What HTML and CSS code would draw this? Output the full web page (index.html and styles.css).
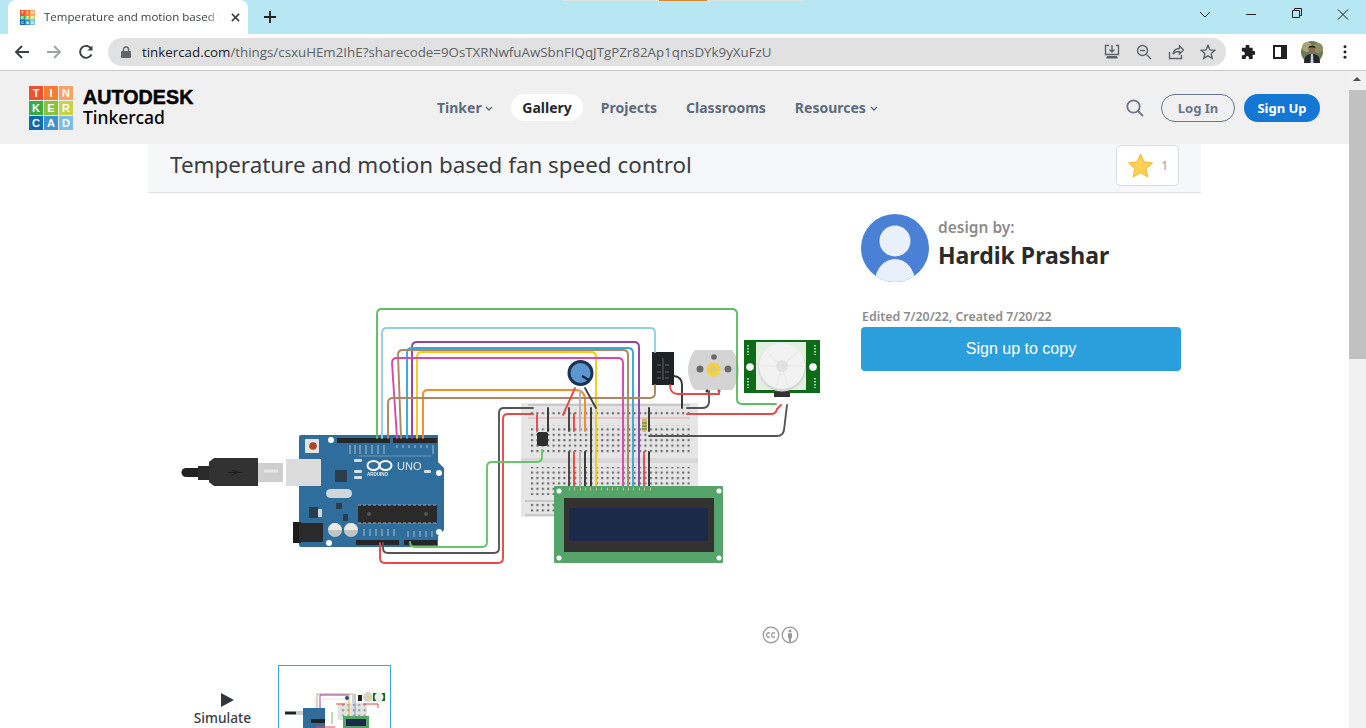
FILE: index.html
```html
<!DOCTYPE html>
<html lang="en">
<head>
<meta charset="utf-8">
<title>Temperature and motion based fan speed control</title>
<link rel="stylesheet" href="styles.css">
</head>
<body>
<header class="chrome">
  <div class="tabstrip">
    <div class="tab">
      <div class="tiles tiles-small" aria-hidden="true">
        <i class="t1">T</i><i class="t2">I</i><i class="t3">N</i><i class="t4">K</i><i class="t5">E</i><i class="t6">R</i><i class="t7">C</i><i class="t8">A</i><i class="t9">D</i>
      </div>
      <span class="tab-title">Temperature and motion based f</span>
      <svg class="tab-close" viewBox="0 0 10 10"><path d="M1 1l8 8M9 1l-8 8"/></svg>
    </div>
    <svg class="new-tab" viewBox="0 0 12 12"><path d="M6 0v12M0 6h12"/></svg>
    <div class="strip-spacer"><div class="strip-mark"><span></span></div></div>
    <div class="window-controls">
      <svg class="win-ico" viewBox="0 0 46 34"><path d="M18 12l5 5 5-5" /></svg>
      <svg class="win-ico" viewBox="0 0 46 34"><path d="M18 14.500h10"/></svg>
      <svg class="win-ico" viewBox="0 0 46 34"><path d="M18.500 10.500h7v7h-7zM20.500 10.500v-2h7v7h-2"/></svg>
      <svg class="win-ico" viewBox="0 0 46 34"><path d="M18 9.500l10 10M28 9.500l-10 10"/></svg>
    </div>
  </div>
  <div class="toolbar">
    <svg class="tb-ico" viewBox="0 0 16 16"><path class="st-dark" d="M15 8H2M8 2L2 8l6 6"/></svg>
    <svg class="tb-ico" viewBox="0 0 16 16"><path class="st-grey" d="M1 8h13M8 2l6 6-6 6"/></svg>
    <svg class="tb-ico" viewBox="0 0 16 16"><path class="st-dark" d="M13.500 10.500A6 6 0 1 1 13.400 5"/><path class="fill-dark" d="M14.500 1.500v5h-5z"/></svg>
    <div class="omnibox">
      <svg class="lock" viewBox="0 0 10 12"><path d="M1 5h8a1 1 0 0 1 1 1v5a1 1 0 0 1-1 1H1a1 1 0 0 1-1-1V6a1 1 0 0 1 1-1z"/><path class="lock-loop" d="M2.500 5V3.500a2.500 2.500 0 0 1 5 0V5"/></svg>
      <span class="url"><b>tinkercad.com</b>/things/csxuHEm2IhE?sharecode=9OsTXRNwfuAwSbnFIQqJTgPZr82Ap1qnsDYk9yXuFzU</span>
      <div class="omni-icons">
        <svg class="omni-ico" viewBox="0 0 16 16"><path d="M5 1.500H1.500v9h13v-9H12M8 1v6.500M5.500 5.500L8 8l2.500-2.500"/><path class="omni-fill" d="M3 12h10l1 2.500H2z"/></svg>
        <svg class="omni-ico" viewBox="0 0 16 16"><circle cx="6.500" cy="6.500" r="5"/><path d="M4 6.500h5M10.500 10.500L15 15"/></svg>
        <svg class="omni-ico" viewBox="0 0 16 16"><path d="M1.500 8v6.500h12V11M5 10c.5-3.500 3-5.500 6.500-5.500V2l4 4-4 4V7.500C9 7.500 6.500 8 5 10z"/></svg>
        <svg class="omni-ico" viewBox="0 0 16 16"><path d="M8 1.500l2 4.400 4.700.5-3.500 3.200 1 4.700L8 11.900l-4.200 2.400 1-4.700L1.300 6.400 6 5.900z"/></svg>
      </div>
    </div>
    <div class="tb-right">
      <svg class="ext-ico" viewBox="0 0 16 16"><path d="M6 1.500a2 2 0 0 1 4 0V3h3.500v3.500H15a2 2 0 0 1 0 4h-1.500V15H9.500v-1.500a1.700 1.700 0 0 0-3.400 0V15H2v-4h1.200a2 2 0 0 0 0-4H2V3h4z"/></svg>
      <svg class="side-ico" viewBox="0 0 14 14"><path d="M0 0h14v14H0z"/><path class="side-hole" d="M2 2h6v10H2z"/></svg>
      <svg class="profile" viewBox="0 0 22 22">
        <circle cx="11" cy="11" r="11" fill="#6f7a57"/>
        <circle cx="6" cy="6" r="5" fill="#a9a37c"/>
        <circle cx="17" cy="7" r="5" fill="#8b8f60"/>
        <path d="M3 22c0-7 3-9 8-9s8 2 8 9z" fill="#23262d"/>
        <path d="M10 13h2l.5 9h-3z" fill="#c6d0db"/>
        <circle cx="11" cy="8" r="3.500" fill="#8d6a50"/>
        <path d="M7.500 7c0-3 7-3 7 0-2-1-5-1-7 0z" fill="#1d1815"/>
      </svg>
      <svg class="menu-ico" viewBox="0 0 4 16"><circle cx="2" cy="2" r="1.700"/><circle cx="2" cy="8" r="1.700"/><circle cx="2" cy="14" r="1.700"/></svg>
    </div>
  </div>
</header>

<div class="viewport">
  <div class="page">
    <nav class="nav">
      <div class="brand">
        <div class="tiles" aria-hidden="true">
          <i class="t1">T</i><i class="t2">I</i><i class="t3">N</i><i class="t4">K</i><i class="t5">E</i><i class="t6">R</i><i class="t7">C</i><i class="t8">A</i><i class="t9">D</i>
        </div>
        <div class="brand-text">
          <span class="brand-top">AUTODESK</span>
          <span class="brand-bottom">Tinkercad</span>
        </div>
      </div>
      <ul class="menu">
        <li class="menu-item">Tinker <svg class="chev" viewBox="0 0 8 5"><path d="M1 1l3 3 3-3"/></svg></li>
        <li class="menu-item menu-active">Gallery</li>
        <li class="menu-item">Projects</li>
        <li class="menu-item">Classrooms</li>
        <li class="menu-item">Resources <svg class="chev" viewBox="0 0 8 5"><path d="M1 1l3 3 3-3"/></svg></li>
      </ul>
      <div class="nav-actions">
        <svg class="search" viewBox="0 0 18 18"><circle cx="7.500" cy="7.500" r="6.200"/><path d="M12 12l5 5"/></svg>
        <a class="btn-login">Log In</a>
        <a class="btn-signup">Sign Up</a>
      </div>
    </nav>

    <main class="content">
      <div class="title-bar">
        <h1 class="title">Temperature and motion based fan speed control</h1>
        <div class="like">
          <svg class="like-star" viewBox="0 0 26 26"><path d="M13 1l3.500 8 8.500.9-6.400 5.700 1.800 8.400L13 19.700 5.600 24l1.800-8.400L1 9.900 9.500 9z"/></svg>
          <span class="like-count">1</span>
        </div>
      </div>

      <div class="columns">
        <section class="left">
          <svg class="diagram" viewBox="160 300 670 275" role="img" aria-label="Circuit diagram">
            <defs>
              <pattern id="holes" x="0" y="0" width="5.400" height="5.400" patternUnits="userSpaceOnUse">
                <rect x="1.700" y="1.700" width="2.200" height="2.200" fill="#6e6e6e"/>
              </pattern>
              <filter id="soft" x="-2%" y="-2%" width="104%" height="104%"><feGaussianBlur stdDeviation="0.450"/></filter>
            </defs>
            <g filter="url(#soft)">
              <!-- breadboard -->
              <rect x="521" y="403" width="177" height="114" fill="#e6e6e6"/>
              <rect x="521" y="458" width="177" height="5" fill="#d8d8d8"/>
              <path d="M528 418h162" stroke="#e0a8a8"/>
              <path d="M528 405h162" stroke="#aaa"/>
              <rect x="530" y="409" width="160" height="8" fill="url(#holes)"/>
              <rect x="530" y="425" width="160" height="28" fill="url(#holes)"/>
              <rect x="530" y="467" width="160" height="28" fill="url(#holes)"/>
              <rect x="530" y="503" width="26" height="10" fill="url(#holes)"/>
              <path d="M525 501h29M525 515h29" stroke="#aaa"/>

              <!-- arduino -->
              <path d="M301 435H438V462L444 468V530L438 536V547H301Q299 547 299 545V437Q299 435 301 435Z" fill="#2f6d9c"/>
              <rect x="305" y="439" width="14" height="14" rx="1" fill="#e3e3e3"/>
              <circle cx="313" cy="446" r="3.800" fill="#a8492c"/>
              <circle cx="331" cy="440" r="3" fill="#fff"/>
              <circle cx="439" cy="473" r="3" fill="#fff"/>
              <circle cx="439" cy="532" r="3" fill="#fff"/>
              <circle cx="329" cy="543" r="3" fill="#fff"/>
              <rect x="337" y="438" width="53" height="5" fill="#26282a"/>
              <rect x="393" y="438" width="44" height="5" fill="#26282a"/>
              <rect x="356" y="540" width="43" height="5" fill="#26282a"/>
              <rect x="404" y="540" width="33" height="5" fill="#26282a"/>
              <rect x="335" y="470" width="12" height="12" rx="1" fill="#2a3d4f"/>
              <rect x="326" y="489" width="26" height="9" rx="4.500" fill="#cfd6dc"/>
              <rect x="358" y="505" width="79" height="18" fill="#2a2a2c"/>
              <path d="M358 505h79M358 523h79" stroke="#9aa5ad" stroke-width="1" stroke-dasharray="3 2"/>
              <circle cx="369" cy="514" r="2" fill="#555"/>
              <circle cx="426" cy="514" r="2" fill="#555"/>
              <rect x="336" y="503" width="6" height="6" fill="#2a3d4f"/>
              <rect x="309" y="507" width="9" height="11" fill="#2a3d4f"/>
              <rect x="318" y="509" width="4" height="8" fill="#cfd6dc"/>
              <rect x="343" y="514" width="5" height="7" fill="#2a3d4f"/>
              <rect x="293" y="522" width="8" height="21" fill="#1c1c1c"/>
              <rect x="299" y="523" width="24" height="19" rx="1" fill="#2a2a2a"/>
              <circle cx="335" cy="530" r="7" fill="#c2c5c3"/>
              <circle cx="351" cy="530" r="7" fill="#c2c5c3"/>
              <path d="M328 530a7 7 0 0 1 14 0zM344 530a7 7 0 0 1 14 0z" fill="#e9e9e6"/>
              <path d="M359 456h72" stroke="#9fb9cf" stroke-width=".6"/>
              <g fill="none" stroke="#fff" stroke-width="2">
                <ellipse cx="373.500" cy="465.500" rx="6" ry="4.500"/>
                <ellipse cx="385.500" cy="465.500" rx="6" ry="4.500"/>
              </g>
              <text class="uno" x="397" y="470">UNO</text>
              <text class="ard" x="367" y="476">ARDUINO</text>
              <rect x="354" y="459" width="8" height="3" rx="1" fill="#d6dde2"/>
              <rect x="354" y="470" width="8" height="3" rx="1" fill="#d6dde2"/>
              <rect x="354" y="476" width="8" height="3" rx="1" fill="#d6dde2"/>
              <rect x="424" y="470" width="7" height="3" rx="1" fill="#d6dde2"/>
              <path d="M350 445v9M355 445v9M360 445v9M366 445v9M372 445v9M378 445v9M384 445v9M397 445v3M403 445v3M409 445v3M415 445v3M421 445v3M427 445v3M433 445v9M364 529v7M370 529v7M376 529v7M382 529v7M388 529v7M394 529v7M408 531v6M414 531v6M420 531v6M426 531v6M432 531v6" stroke="#a9c0d2" stroke-width="1"/>

              <!-- USB cable -->
              <path d="M186 472.500h16" stroke="#222" stroke-width="9" stroke-linecap="round"/>
              <path d="M198 466h11v14h-11z" fill="#2a2a2a"/>
              <path d="M209 462l5-4h44v28h-44l-5-4z" fill="#333"/>
              <path d="M228 472.500h14M232 470l6 2-6 3" stroke="#1d1d1d" stroke-width="1" fill="none"/>
              <path d="M258 463h25v19h-25z" fill="#cfcfcf"/>
              <path d="M264 471h14" stroke="#e6e6e6" stroke-width="3"/>
              <path d="M286 459h35v27h-35z" fill="#dcdcdc"/>

              <!-- relay, motor, PIR -->
              <rect x="652" y="352" width="22" height="33" fill="#1f2226"/>
              <path d="M663 358v22M657 365h4M665 365h4M657 372h4M665 372h4M657 378h4M665 378h4" stroke="#777" stroke-width=".8"/>
              <path d="M695 350h37c4 4 7 13 7 20s-3 16-7 20h-37c-4-4-7-13-7-20s3-16 7-20z" fill="#d4d4d4"/>
              <circle cx="714" cy="357" r="2.800" fill="#6a6a6a"/>
              <circle cx="700" cy="369" r="3.500" fill="#6a6a6a"/>
              <circle cx="728" cy="369" r="3.500" fill="#6a6a6a"/>
              <circle cx="713.500" cy="369.500" r="6.500" fill="#f4d046" stroke="#f4d046" stroke-width="2" stroke-dasharray="1.800 1.500"/>
              <circle cx="713.500" cy="369.500" r="3.300" fill="#dcc878"/>
              <circle cx="707" cy="391" r="1.500" fill="#333"/>
              <circle cx="719" cy="391" r="1.500" fill="#b22"/>

              <rect x="744" y="340" width="76" height="53" fill="#0d6a12"/>
              <rect x="756" y="342" width="50" height="48" fill="#e3f0df"/>
              <circle cx="782" cy="367.500" r="24" fill="#d6d6d6"/>
              <circle cx="782" cy="366" r="23" fill="#f2f2f2"/>
              <path d="M782 366l-16-15M782 366l16-15M782 366l-6 21M782 366l6 21M782 366h-22M782 366h22" stroke="#ebebeb" stroke-width="1.300"/>
              <circle cx="782" cy="366" r="6" fill="#e2e2e2"/>
              <circle cx="750" cy="367" r="3.800" fill="#fff"/>
              <circle cx="813" cy="367" r="3.800" fill="#fff"/>
              <path d="M748 345v10M815 345v10M748 378v10M815 378v10" stroke="#a9cfa9" stroke-width="2" stroke-dasharray="1.500 1.500"/>
              <rect x="774" y="392" width="16" height="5" fill="#333"/>

              <!-- wires -->
              <g class="wires">
                <path stroke="#5cc05f" d="M377 438V314q0-5 5-5H732q5 0 5 5V399q0 5 5 5H776"/>
                <path stroke="#8ed1e2" d="M382 438V333q0-5 5-5H650q5 0 5 5V352"/>
                <path stroke="#8b44a8" d="M412 438V347q0-5 5-5H634q5 0 5 5V488"/>
                <path stroke="#35a9dc" d="M407 438V353q0-5 5-5H628q5 0 5 5V488"/>
                <path stroke="#b0855f" d="M401 438L398 355q0-5 5-5H623q5 0 5 5V488"/>
                <path stroke="#f3cb19" d="M417 438V357q0-5 5-5H591q5 0 5 5V488"/>
                <path stroke="#d64aa8" d="M397 438L392 363q0-5 5-5H618q5 0 5 5V488"/>
                <path stroke="#f28c28" d="M423 438V395q0-5 5-5H575q10 0 10 10V431"/>
                <path stroke="#b0855f" d="M388 438V403q0-5 5-5H650q5 0 5-5V385"/>
                <path stroke="#555" d="M533 408H504q-5 0-5 5V548q0 5-5 5H388q-5 0-5-5V543"/>
                <path stroke="#e64a4a" d="M533 414H508q-5 0-5 5V558q0 5-5 5H385q-5 0-5-5V543"/>
                <path stroke="#69c56c" d="M410 542q0 5 5 5H482q5 0 5-5V467q0-5 5-5H537q5 0 5-5V450"/>
                <path stroke="#e64a4a" d="M537 415V431"/>
                <path stroke="#333" d="M548 408V431"/>
                <path stroke="#444" d="M569 408V431M569 452V488"/>
                <path stroke="#e64a4a" d="M574 414V431M574 452V488"/>
                <path stroke="#b5b5b5" d="M580 390V431M580 452V488"/>
                <path stroke="#333" d="M585 452V488"/>
                <path stroke="#333" d="M591 408V488"/>
                <path stroke="#e64a4a" d="M563 415L575 388"/>
                <path stroke="#444" d="M596 408L585 388"/>
                <path stroke="#333" d="M649 408V431M649 452V488"/>
                <path stroke="#e64a4a" d="M644 452V488"/>
                <path stroke="#555" d="M649 436H777q6 0 7-6L787 405"/>
                <path stroke="#e64a4a" d="M687 414H771q5 0 6-5L781 405"/>
                <path stroke="#555" d="M687 408H702q6 0 7-5V391"/>
                <path stroke="#333" d="M682 408V385q0-8-8-9"/>
                <path stroke="#e64a4a" d="M670 385q0 9 8 9H719V391"/>
              </g>
              <rect x="642" y="418" width="5" height="14" rx="2" fill="#d8b56a"/>
              <path d="M642 423h5M642 426h5M642 429h5" stroke="#3b8f3f" stroke-width="1.200"/>
              <rect x="537" y="432" width="11" height="14" rx="2" fill="#2e2e2e"/>

              <circle cx="580.500" cy="373" r="13" fill="#1e3550"/>
              <circle cx="580.500" cy="373" r="10" fill="#5a97d1"/>
              <path d="M582 376l7 4" stroke="#15273c" stroke-width="2.200"/>

              <!-- LCD -->
              <rect x="554" y="486" width="169" height="77" rx="1" fill="#55a46b"/>
              <rect x="564" y="498" width="150" height="54" fill="#333"/>
              <rect x="569" y="508" width="139" height="33" fill="#1d2b4a"/>
              <circle cx="559" cy="491" r="2.500" fill="#fff"/>
              <circle cx="719" cy="491" r="2.500" fill="#fff"/>
              <circle cx="559" cy="558" r="2.500" fill="#fff"/>
              <circle cx="719" cy="558" r="2.500" fill="#fff"/>
              <path d="M569 489h1M574 489h1M580 489h1M585 489h1M590 489h1M596 489h1M601 489h1M607 489h1M612 489h1M617 489h1M623 489h1M628 489h1M633 489h1M639 489h1M644 489h1M650 489h1" stroke="#cdb98e" stroke-width="3"/>
            </g>
          </svg>
          <div class="license">
            <svg class="cc" viewBox="0 0 37 18"><circle cx="9" cy="9" r="7.800"/><path d="M8 7.200a2.200 2.200 0 1 0 0 3.600M13 7.200a2.200 2.200 0 1 0 0 3.600"/><circle cx="28" cy="9" r="7.800"/><circle class="cc-fill" cx="28" cy="5" r="1.500"/><path class="cc-fill" d="M26 7.200h4v5h-1V16h-2v-3.800h-1z"/></svg>
          </div>
          <div class="thumbs">
            <div class="simulate">
              <svg class="sim-play" viewBox="0 0 13 14"><path d="M0 0l13 7-13 7z"/></svg>
              <span class="sim-label">Simulate</span>
            </div>
            <div class="thumb">
              <svg class="thumb-art" viewBox="279 666 111 62">
                <path d="M317 710V694H353V716" fill="none" stroke="#c4a283"/>
                <path d="M320 708V695H349" fill="none" stroke="#8b44a8"/>
                <path d="M315 708V697" fill="none" stroke="#e6e6e6"/>
                <path d="M320 699H345" fill="none" stroke="#f7dede"/>
                <rect x="338" y="703" width="29" height="17" fill="#e2e2e2"/>
                <rect x="339" y="704" width="27" height="12" fill="url(#holes)" opacity=".6"/>
                <path d="M349 694V716" fill="none" stroke="#e4ba27"/>
                <path d="M355 694V716" fill="none" stroke="#6a9fc9"/>
                <path d="M285 713H297" stroke="#222" stroke-width="3"/>
                <rect x="296" y="711" width="7" height="4" fill="#ccc"/>
                <rect x="303" y="708" width="22" height="20" fill="#2f6d9c"/>
                <rect x="311" y="719" width="14" height="4" fill="#222"/>
                <rect x="343" y="716" width="26" height="12" fill="#55a46b"/>
                <rect x="346" y="719" width="20" height="7" fill="#1d2b4a"/>
                <circle cx="347" cy="698" r="2" fill="#1e4f80"/>
                <rect x="358" y="695" width="4" height="6" fill="#222"/>
                <circle cx="368" cy="697" r="5" fill="#d4d4d4"/>
                <circle cx="368" cy="697" r="1.500" fill="#f4d046"/>
                <rect x="373" y="693" width="12" height="8" fill="#0d6a12"/>
                <circle cx="379" cy="697" r="4.500" fill="#ededee"/>
                <path d="M332 712V724" stroke="#69c56c" fill="none"/>
                <path d="M316 727H335" stroke="#e64a4a" fill="none"/>
                <path d="M363 704H378M378 704v4" stroke="#e64a4a" fill="none"/>
                <path d="M336 704H345" stroke="#e64a4a" fill="none"/>
              </svg>
            </div>
          </div>
        </section>

        <aside class="right">
          <div class="author">
            <svg class="avatar" viewBox="0 0 68 68">
              <defs><clipPath id="avatar-clip"><circle cx="34" cy="34" r="34"/></clipPath></defs>
              <circle cx="34" cy="34" r="34" fill="#4a80d6"/>
              <g clip-path="url(#avatar-clip)" fill="#e9f0fb">
                <circle cx="34" cy="27" r="15.500"/>
                <ellipse cx="34" cy="68" rx="20" ry="23"/>
              </g>
            </svg>
            <div class="author-text">
              <span class="design-by">design by:</span>
              <span class="author-name">Hardik Prashar</span>
            </div>
          </div>
          <p class="dates">Edited 7/20/22, Created 7/20/22</p>
          <a class="copy-btn">Sign up to copy</a>
        </aside>
      </div>
    </main>
  </div>
  <div class="scrollbar">
    <div class="sb-up"></div>
    <div class="sb-thumb"></div>
  </div>
</div>
</body>
</html>
```
FILE: styles.css
```css
* { box-sizing: border-box; }
html, body { margin: 0; height: 100%; overflow: hidden; }
body { width: 1366px; height: 728px; display: flex; flex-direction: column; background: #fff; font-family: "Noto Sans", sans-serif; color: #2b2b2b; }

/* browser chrome */
.chrome { flex: none; }
.tabstrip { height: 34px; background: #b6e7f3; display: flex; align-items: flex-end; }
.tab { width: 240px; height: 34px; margin-left: 8px; padding: 0 9px 0 12px; background: #fff; border-radius: 8px 8px 0 0; display: flex; align-items: center; gap: 9px; position: relative; }
.tab-title { font: 11.500px/16px "Open Sans", sans-serif; color: #3c4043; white-space: nowrap; width: 176px; padding-bottom: 1px; -webkit-mask-image: linear-gradient(90deg, #000 93%, transparent 100%); mask-image: linear-gradient(90deg, #000 93%, transparent 100%); }
.tab-close { width: 9px; height: 9px; flex: none; fill: none; stroke: #3c4043; stroke-width: 1.700; margin-left: 2px; }
.new-tab { width: 12px; height: 12px; margin: 0 0 11px 16px; fill: none; stroke: #202124; stroke-width: 1.800; flex: none; }
.strip-spacer { flex: 1; height: 34px; position: relative; }
.strip-mark { width: 241px; height: 1px; margin-left: 287px; background: #dfe1e3; }
.strip-mark span { display: block; width: 48px; height: 1px; margin-left: 96px; background: #d98a2b; }
.window-controls { display: flex; height: 34px; margin-right: 0; align-self: flex-start; }
.win-ico { width: 46px; height: 34px; fill: none; stroke: #222; stroke-width: 1; display: block; }

.toolbar { height: 37px; background: #fff; border-bottom: 1px solid #c8c9cb; display: flex; align-items: center; padding: 0 13px 0 14px; gap: 16px; }
.tb-ico { width: 16px; height: 16px; flex: none; fill: none; stroke-width: 1.900; }
.st-dark { stroke: #3c4043; fill: none; }
.st-grey { stroke: #a0a3a6; fill: none; }
.fill-dark { fill: #3c4043; stroke: none; }
.omnibox { width: 1118px; height: 28px; margin-left: -2px; background: #e1e1e1; border-radius: 14px; display: flex; align-items: center; padding: 0 10px 0 13px; flex: none; }
.lock { width: 10px; height: 12px; flex: none; fill: #5f6368; margin-right: 11px; }
.lock-loop { fill: none; stroke: #5f6368; stroke-width: 1.400; }
.url { font: 13.330px "Open Sans", sans-serif; color: #5f6368; white-space: nowrap; flex: 1; overflow: hidden; }
.url b { font-weight: 400; color: #202124; }
.omni-icons { display: flex; gap: 16px; }
.omni-ico { width: 16px; height: 16px; fill: none; stroke: #5f6368; stroke-width: 1.400; }
.omni-fill { fill: #5f6368; stroke: none; }
.tb-right { display: flex; align-items: center; gap: 0; margin-left: -2px; flex: none; }
.ext-ico { width: 15px; height: 15px; fill: #202124; margin-right: 18px; }
.side-ico { width: 14px; height: 14px; fill: #202124; margin-right: 14px; }
.side-hole { fill: #fff; }
.profile { width: 22px; height: 22px; margin-right: 20px; }
.menu-ico { width: 4px; height: 14px; fill: #202124; }

/* tiles */
.tiles { display: grid; grid-template-columns: repeat(3, 14px); grid-auto-rows: 14px; gap: 1px; flex: none; }
.tiles i { display: flex; align-items: center; justify-content: center; font: 700 11px "Liberation Sans", sans-serif; font-style: normal; color: #fff; }
.tiles-small { grid-template-columns: repeat(3, 5px); grid-auto-rows: 5px; gap: 0; }
.tiles-small i { font-size: 4px; }
.t1 { background: #f1502f; }
.t2 { background: #f47c33; }
.t3 { background: #f8a263; }
.t4 { background: #3aaa48; }
.t5 { background: #86c33c; }
.t6 { background: #c9d444; }
.t7 { background: #0f6ab4; }
.t8 { background: #3c92d4; }
.t9 { background: #7cbde3; }

/* page */
.viewport { flex: 1; min-height: 0; display: flex; }
.page { flex: 1; min-width: 0; overflow: hidden; }
.scrollbar { width: 17px; flex: none; background: #f1f1f1; }
.sb-up { height: 19px; position: relative; }
.sb-up::before { content: ""; position: absolute; left: 4px; top: 6px; border: 4px solid transparent; border-top: 0; border-bottom: 4px solid #505050; }
.sb-thumb { height: 269px; background: #c1c1c1; }

.nav { height: 73px; background: #f0f0f0; display: flex; align-items: center; padding: 0 29px 0 29px; position: relative; }
.brand { display: flex; align-items: center; gap: 10px; width: 408px; flex: none; }
.brand-text { display: flex; flex-direction: column; color: #000; }
.brand-top { font: 700 19.600px/19px "Liberation Sans", sans-serif; letter-spacing: .1px; -webkit-text-stroke: .5px #000; }
.brand-bottom { font: 500 17.500px/21px "Noto Sans", sans-serif; }
.menu { list-style: none; margin: 0; padding: 0; display: flex; align-items: center; gap: 29px; }
.menu-item { font: 700 14px/27px "Noto Sans", sans-serif; color: #5d6b7e; white-space: nowrap; }
.menu-active { background: #fff; color: #26282c; border-radius: 14px; padding: 0 11px; margin: 0 -11px; }
.chev { width: 8px; height: 5px; fill: none; stroke: #5d6b7e; stroke-width: 1.300; vertical-align: 2px; }
.nav-actions { margin-left: auto; display: flex; align-items: center; }
.search { width: 18px; height: 18px; fill: none; stroke: #69758a; stroke-width: 1.800; margin-right: 17px; }
.btn-login, .btn-signup { font: 700 13px/26px "Noto Sans", sans-serif; height: 28px; border-radius: 14px; text-align: center; }
.btn-login { width: 74px; border: 1px solid #69758a; color: #69758a; margin-right: 9px; }
.btn-signup { width: 76px; background: #1477d4; color: #fff; line-height: 28px; }

.content { width: 1053px; margin-left: 148px; }
.title-bar { height: 49px; background: #f6f7f9; border-bottom: 1px solid #dfe2e6; display: flex; align-items: center; justify-content: space-between; padding: 0 22px; }
.title { margin: 0; font: 400 22.400px/1 "Noto Sans", sans-serif; color: #3a3d40; padding-bottom: 5px; }
.like { width: 63px; height: 41px; background: #fff; border: 1px solid #d8dce2; border-radius: 4px; display: flex; align-items: center; gap: 7px; padding-left: 10px; margin-bottom: 5px; }
.like-star { width: 27px; height: 26px; fill: #ffd257; stroke: #f4b62c; stroke-width: 1; }
.like-count { font-size: 13px; color: #97a0ad; padding-bottom: 2px; }

.columns { display: flex; }
.left { width: 713px; flex: none; }
.diagram { display: block; width: 670px; height: 275px; margin: 107px 0 0 12px; }
.diagram .wires path { fill: none; stroke-width: 1.900; stroke-linecap: round; }
.uno { font: 400 11px "Liberation Sans", sans-serif; fill: #dfe9f1; }
.ard { font: 700 4.500px "Liberation Sans", sans-serif; fill: #e6eef4; }
.license { height: 18px; margin-top: 51px; padding-left: 614px; }
.cc { display: block; width: 37px; height: 18px; fill: none; stroke: #9a9a9a; stroke-width: 1.300; filter: blur(.3px); }
.cc-fill { fill: #9a9a9a; stroke: none; }
.thumbs { display: flex; margin-top: 21px; padding-left: 47px; gap: 28px; align-items: flex-start; }
.simulate { width: 55px; margin-top: 28px; display: flex; flex-direction: column; align-items: center; gap: 2px; }
.sim-play { width: 13px; height: 14px; fill: #33373d; margin-left: 10px; }
.sim-label { font: 500 13.700px/18px "Noto Sans", sans-serif; color: #3a3d40; white-space: nowrap; }
.thumb { width: 113px; height: 80px; border: 1px solid #35a9dc; }
.thumb-art { display: block; width: 111px; height: 62px; }

.right { width: 320px; flex: none; padding-top: 21px; }
.author { display: flex; align-items: center; gap: 9px; }
.avatar { width: 68px; height: 68px; flex: none; }
.author-text { display: flex; flex-direction: column; padding-bottom: 8px; }
.design-by { font: 600 15.500px/22px "Noto Sans", sans-serif; color: #8c8c8c; }
.author-name { font: 700 23px/34px "Noto Sans", sans-serif; color: #2b2b2b; }
.dates { margin: 26px 0 2px 1px; font: 600 12.400px/17px "Noto Sans", sans-serif; color: #8c8c8c; white-space: nowrap; }
.copy-btn { display: block; height: 44px; background: #2a9fdc; border-radius: 4px; color: #fff; text-align: center; font: 400 16px/44px "Liberation Sans", sans-serif; }
```
